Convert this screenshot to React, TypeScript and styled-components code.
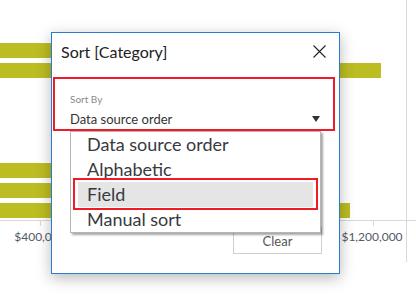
import React from "react";
import styled, { createGlobalStyle } from "styled-components";

const Global = createGlobalStyle`
  html, body { margin: 0; padding: 0; background: #fff; }
  body { font-family: Lato, "Liberation Sans", sans-serif; }
  * { box-sizing: border-box; }
`;

const Page = styled.div`
  position: relative;
  width: 416px;
  height: 299px;
  overflow: hidden;
  background: #fff;
`;

const ChartSvg = styled.svg`
  display: block;
`;

const Dialog = styled.div`
  position: absolute;
  left: 51px;
  top: 32px;
  width: 289px;
  height: 242px;
  background: #fff;
  border: 1px solid #2b7bd3;
  box-shadow: 0 4px 14px rgba(0, 0, 0, 0.28);
  display: flex;
  flex-direction: column;
`;

const Header = styled.div`
  height: 44px;
  display: flex;
  align-items: flex-start;
  justify-content: space-between;
  padding: 9px 13px 0 9px;
`;

const Title = styled.div`
  font-size: 16px;
  line-height: 20px;
  color: #222;
`;

const CloseButton = styled.button`
  border: 0;
  background: none;
  padding: 0;
  margin-top: 3px;
  width: 13px;
  height: 13px;
  display: flex;
`;

const FieldBox = styled.div`
  margin-left: 1px;
  width: 282px;
  height: 54px;
  border: 2px solid #ee1c25;
  padding: 14px 13px 0 15px;
  display: flex;
  flex-direction: column;
`;

const FieldLabel = styled.div`
  font-size: 10px;
  line-height: 12px;
  color: #8a8a8a;
`;

const ValueRow = styled.div`
  margin-top: 6px;
  display: flex;
  align-items: center;
  justify-content: space-between;
`;

const Value = styled.div`
  font-size: 13px;
  line-height: 16px;
  color: #333;
`;

const Caret = styled.div`
  width: 0;
  height: 0;
  border-left: 4.5px solid transparent;
  border-right: 4.5px solid transparent;
  border-top: 6px solid #333;
`;

const Footer = styled.div`
  margin-top: 96px;
  display: flex;
  justify-content: flex-end;
  padding-right: 17px;
`;

const ClearButton = styled.button`
  width: 89px;
  height: 27px;
  background: #fff;
  border: 1px solid #cfcfcf;
  font-family: Lato, "Liberation Sans", sans-serif;
  font-size: 13px;
  color: #555;
  padding: 0;
`;

const Menu = styled.ul`
  position: absolute;
  left: 18px;
  top: 98px;
  width: 251px;
  margin: 0;
  padding: 0;
  list-style: none;
  background: #fff;
  border: 1px solid #b5b5b5;
  box-shadow: 2px 2px 2px rgba(0, 0, 0, 0.35);
`;

const MenuItem = styled.li<{ $active?: boolean }>`
  position: relative;
  height: 25px;
  margin: 0 7px;
  padding-left: 9px;
  font-size: 18px;
  line-height: 25px;
  color: #383a40;
  background: ${(p) => (p.$active ? "#e5e5e5" : "transparent")};
`;

const Highlight = styled.span`
  position: absolute;
  left: -5px;
  right: -5px;
  top: -4px;
  bottom: -3px;
  border: 2px solid #ee1c25;
  pointer-events: none;
`;

const bars: { y: number; w: number }[] = [
  { y: 43, w: 150 },
  { y: 63, w: 381 },
  { y: 163, w: 240 },
  { y: 183, w: 300 },
  { y: 203, w: 350 },
];
const items = ["Data source order", "Alphabetic", "Field", "Manual sort"];

function Chart() {
  return (
    <ChartSvg width={416} height={299} viewBox="0 0 416 299">
      <line x1={406.5} y1={0} x2={406.5} y2={262} stroke="#d9d9d9" />
      {bars.map((b, i) => (
        <rect key={i} x={0} y={b.y} width={b.w} height={15} fill="#bcbd22" />
      ))}
      <line x1={0} y1={220.5} x2={416} y2={220.5} stroke="#d9d9d9" />
      <line x1={40.5} y1={220} x2={40.5} y2={226} stroke="#d9d9d9" />
      <line x1={373.5} y1={220} x2={373.5} y2={226} stroke="#d9d9d9" />
      <text x={40} y={241} fontSize={12} fill="#555a66" textAnchor="middle" fontFamily="Lato, 'Liberation Sans', sans-serif">
        $400,000
      </text>
      <text x={372} y={241} fontSize={12} fill="#555a66" textAnchor="middle" fontFamily="Lato, 'Liberation Sans', sans-serif">
        $1,200,000
      </text>
    </ChartSvg>
  );
}

export default function App() {
  return (
    <Page>
      <Global />
      <Chart />
      <Dialog>
        <Header>
          <Title>Sort [Category]</Title>
          <CloseButton aria-label="Close">
            <svg width="13" height="13" viewBox="0 0 13 13">
              <path d="M0.5 0.5 L12.5 12.5 M12.5 0.5 L0.5 12.5" stroke="#222" strokeWidth="1.1" fill="none" />
            </svg>
          </CloseButton>
        </Header>
        <FieldBox>
          <FieldLabel>Sort By</FieldLabel>
          <ValueRow>
            <Value>Data source order</Value>
            <Caret />
          </ValueRow>
        </FieldBox>
        <Footer>
          <ClearButton>Clear</ClearButton>
        </Footer>
        <Menu>
          {items.map((it) => (
            <MenuItem key={it} $active={it === "Field"}>
              {it}
              {it === "Field" && <Highlight />}
            </MenuItem>
          ))}
        </Menu>
      </Dialog>
    </Page>
  );
}
